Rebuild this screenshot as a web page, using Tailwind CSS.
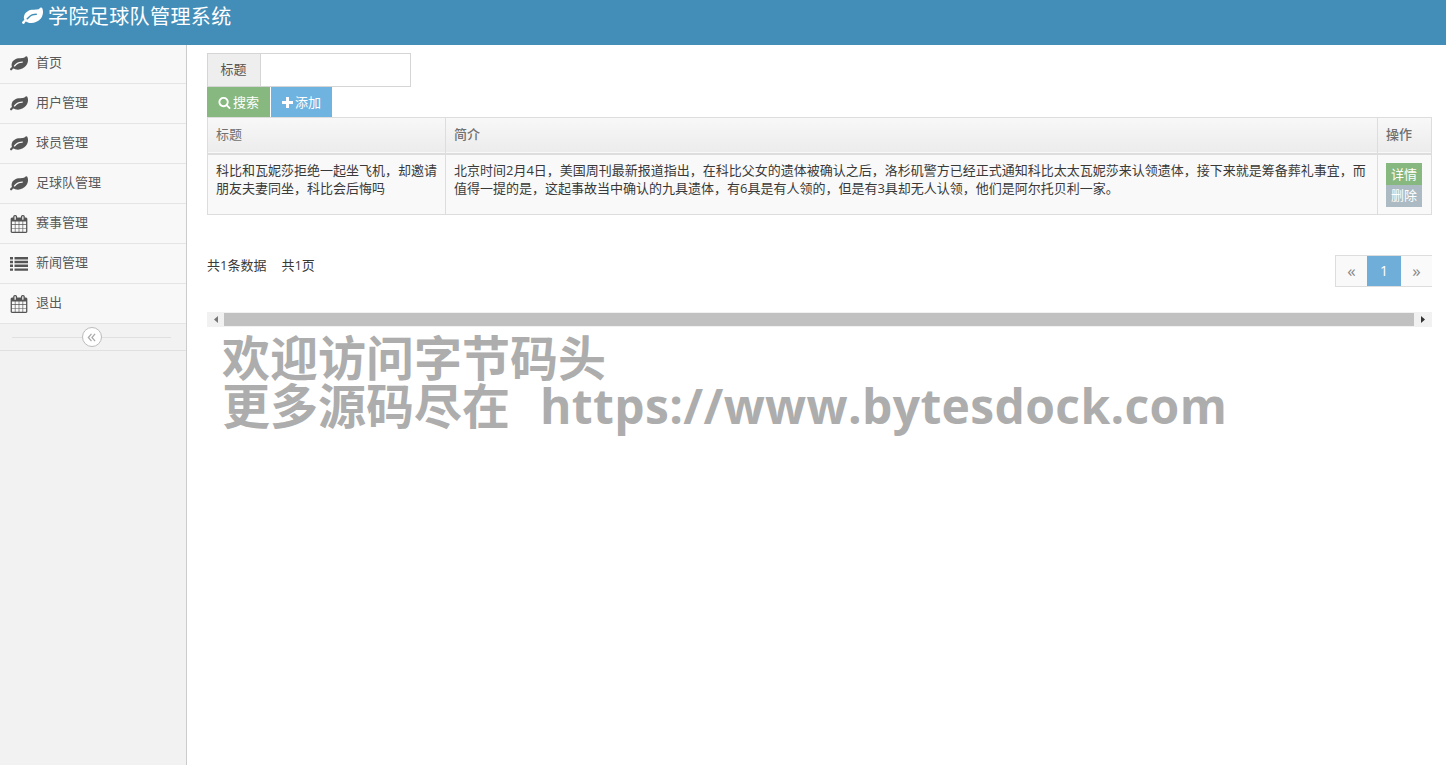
<!DOCTYPE html>
<html lang="zh-CN">
<head>
    <meta charset="UTF-8">
    <title>学院足球队管理系统</title>
    <script src="https://cdn.jsdelivr.net/npm/@tailwindcss/browser@4"></script>
</head>
<body class="h-[765px] overflow-hidden bg-white text-[13px] leading-[18px] text-[#393939] font-['Open_Sans','Noto_Sans_CJK_SC',sans-serif]">

    <svg class="hidden">
        <symbol id="leaf" viewBox="0 0 1792 1792"><path d="M1280 704q0-26-19-45t-45-19q-172 0-318 49.5t-259.5 134-235.5 219.5q-19 21-19 45 0 26 19 45t45 19q24 0 45-19 27-24 74-71t67-66q137-124 268.5-176t313.5-52q26 0 45-19t19-45zm512-198q0 95-20 193-46 224-184.5 383t-357.5 268q-214 108-438 108-148 0-286-47-15-5-88-42t-96-37q-16 0-39.5 32t-45 70-52.5 70-60 32q-30 0-51-11t-31-24-27-42q-2-4-6-11t-5.5-10-3-9.5-1.5-13.5q0-35 31-73.5t68-65.5 68-56 31-48q0-4-14-38t-16-44q-9-51-9-104 0-115 43.5-220t119-184.5 170.5-139 204-95.5q55-18 145-25.5t179.5-9 178.5-6 163.5-24 113.5-56.5l29.5-29.5 29.5-28 27-20 36.5-16 43.5-4.5q39 0 70.5 46t47.5 112 24 124 8 96z"/></symbol>
        <symbol id="calendar" viewBox="0 0 1792 1792"><path d="M192 1664h288v-288h-288v288zm352 0h320v-288h-320v288zm-352-352h288v-320h-288v320zm352 0h320v-320h-320v320zm-352-384h288v-288h-288v288zm736 736h320v-288h-320v288zm-384-736h320v-288h-320v288zm768 736h288v-288h-288v288zm-384-352h320v-320h-320v320zm-352-864v-288q0-13-9.5-22.5t-22.5-9.5h-64q-13 0-22.5 9.5t-9.5 22.5v288q0 13 9.5 22.5t22.5 9.5h64q13 0 22.5-9.5t9.5-22.5zm736 864h288v-320h-288v320zm-384-384h320v-288h-320v288zm384 0h288v-288h-288v288zm32-480v-288q0-13-9.5-22.5t-22.5-9.5h-64q-13 0-22.5 9.5t-9.5 22.5v288q0 13 9.5 22.5t22.5 9.5h64q13 0 22.5-9.5t9.5-22.5zm384-64v1280q0 52-38 90t-90 38h-1408q-52 0-90-38t-38-90v-1280q0-52 38-90t90-38h128v-96q0-66 47-113t113-47h64q66 0 113 47t47 113v96h384v-96q0-66 47-113t113-47h64q66 0 113 47t47 113v96h128q52 0 90 38t38 90z"/></symbol>
        <symbol id="list" viewBox="0 0 18 14"><path d="M0 0h3v2.400H0zM0 3.800h3v2.400H0zM0 7.600h3V10H0zM0 11.400h3v2.400H0zM4.500 0H18v2.400H4.500zM4.500 3.800H18v2.400H4.500zM4.500 7.600H18V10H4.500zM4.500 11.400H18v2.400H4.500z"/></symbol>
        <symbol id="search" viewBox="0 0 1792 1792"><path d="M1216 832q0-185-131.5-316.5t-316.5-131.5-316.5 131.5-131.5 316.5 131.5 316.5 316.5 131.5 316.5-131.5 131.5-316.5zm512 832q0 52-38 90t-90 38q-54 0-90-38l-343-342q-179 124-399 124-143 0-273.5-55.5t-225-150-150-225-55.5-273.5 55.5-273.5 150-225 225-150 273.5-55.5 273.5 55.5 225 150 150 225 55.5 273.5q0 220-124 399l343 343q37 37 37 90z"/></symbol>
    </svg>

    <header class="h-[45px] bg-[#438eb9] pl-[22px] pt-[4px] flex items-start gap-[5px] text-white text-[20px] leading-[26px] tracking-[0.4px]">
        <svg class="w-[21px] h-[21px] mt-[2px] fill-white"><use href="#leaf"/></svg>
        <span>学院足球队管理系统</span>
    </header>

    <div class="flex h-[720px]">
        <aside class="w-[187px] shrink-0 bg-[#f2f2f2] border-r border-[#ccc] text-[#585858]">
            <a class="h-[39px] bg-[#f8f8f8] border-b border-[#e5e5e5] flex items-center pl-[10px] gap-[8px]"><svg class="w-[18px] h-[18px] fill-[#555]"><use href="#leaf"/></svg><span class="mb-[4px]">首页</span></a>
            <a class="h-[40px] bg-[#f8f8f8] border-b border-[#e5e5e5] flex items-center pl-[10px] gap-[8px]"><svg class="w-[18px] h-[18px] fill-[#555]"><use href="#leaf"/></svg><span class="mb-[4px]">用户管理</span></a>
            <a class="h-[40px] bg-[#f8f8f8] border-b border-[#e5e5e5] flex items-center pl-[10px] gap-[8px]"><svg class="w-[18px] h-[18px] fill-[#555]"><use href="#leaf"/></svg><span class="mb-[4px]">球员管理</span></a>
            <a class="h-[40px] bg-[#f8f8f8] border-b border-[#e5e5e5] flex items-center pl-[10px] gap-[8px]"><svg class="w-[18px] h-[18px] fill-[#555]"><use href="#leaf"/></svg><span class="mb-[4px]">足球队管理</span></a>
            <a class="h-[40px] bg-[#f8f8f8] border-b border-[#e5e5e5] flex items-center pl-[10px] gap-[8px]"><svg class="w-[18px] h-[18px] fill-[#555]"><use href="#calendar"/></svg><span class="mb-[4px]">赛事管理</span></a>
            <a class="h-[40px] bg-[#f8f8f8] border-b border-[#e5e5e5] flex items-center pl-[10px] gap-[8px]"><svg class="w-[18px] h-[14px] fill-[#555]"><use href="#list"/></svg><span class="mb-[4px]">新闻管理</span></a>
            <a class="h-[40px] bg-[#f8f8f8] border-b border-[#e5e5e5] flex items-center pl-[10px] gap-[8px]"><svg class="w-[18px] h-[18px] fill-[#555]"><use href="#calendar"/></svg><span class="mb-[4px]">退出</span></a>
            <div class="h-[27px] border-b border-[#e0e0e0] flex items-center pl-[12px] pr-[15px]">
                <div class="flex-1 h-px bg-[#e0e0e0]"></div>
                <div class="w-[20px] h-[20px] rounded-full bg-white border border-[#bbb] flex items-center justify-center">
                    <svg class="w-[9px] h-[9px] fill-none stroke-[#aaa] stroke-[1.4]" viewBox="0 0 10 10"><path d="M5 1 1.500 5 5 9M9 1 5.500 5 9 9"/></svg>
                </div>
                <div class="flex-1 h-px bg-[#e0e0e0]"></div>
            </div>
        </aside>

        <main class="flex-1 pl-[20px] pr-[14px] pt-[8px]">
            <div class="flex w-[204px] h-[34px] border border-[#d5d5d5]">
                <span class="w-[53px] pb-[2px] pr-[1px] bg-[#eee] border-r border-[#d5d5d5] text-[#555] flex items-center justify-center">标题</span>
                <input type="text" class="flex-1 min-w-0 bg-white outline-none">
            </div>

            <div class="flex gap-px h-[30px]">
                <button class="w-[63px] bg-[#87b87f] text-white flex items-center justify-center gap-[2px]"><svg class="w-[13px] h-[13px] fill-white"><use href="#search"/></svg>搜索</button>
                <button class="w-[61px] bg-[#6fb3e0] text-white flex items-center justify-center gap-[2px]"><svg class="w-[11px] h-[11px] fill-white" viewBox="0 0 11 11"><path d="M4 0h3v4h4v3H7v4H4V7H0V4h4z"/></svg>添加</button>
            </div>

            <table class="w-[1225px] table-fixed border-collapse border border-[#ddd] bg-[#f9f9f9]">
                <thead>
                    <tr class="h-[36px] bg-gradient-to-b from-[#f8f8f8] to-[#ececec] text-[#707070] border-b-2 border-[#ddd] text-left">
                        <th class="w-[238px] px-[8px] pb-[2px] font-normal border-r border-[#ddd]">标题</th>
                        <th class="px-[8px] pb-[2px] font-medium border-r border-[#ddd]">简介</th>
                        <th class="w-[54px] px-[8px] pb-[2px] font-medium">操作</th>
                    </tr>
                </thead>
                <tbody>
                    <tr class="h-[61px]">
                        <td class="px-[8px] pt-[6px] align-top border-r border-[#ddd]">科比和瓦妮莎拒绝一起坐飞机，却邀请朋友夫妻同坐，科比会后悔吗</td>
                        <td class="px-[8px] pt-[6px] align-top border-r border-[#ddd]">北京时间2月4日，美国周刊最新报道指出，在科比父女的遗体被确认之后，洛杉矶警方已经正式通知科比太太瓦妮莎来认领遗体，接下来就是筹备葬礼事宜，而值得一提的是，这起事故当中确认的九具遗体，有6具是有人领的，但是有3具却无人认领，他们是阿尔托贝利一家。</td>
                        <td class="px-[8px] pt-[8px] align-top">
                            <div class="w-[36px] h-[22px] bg-[#87b87f] text-white text-center leading-[22px]">详情</div>
                            <div class="w-[36px] h-[22px] bg-[#abbac3] text-white text-center leading-[20px]">删除</div>
                        </td>
                    </tr>
                </tbody>
            </table>

            <div class="flex justify-between items-start mt-[40px] w-[1225px]">
                <div class="flex gap-[15px] mt-[1px]"><span>共1条数据</span><span>共1页</span></div>
                <div class="flex h-[32px] border-y border-l border-[#ddd] text-[#888] text-[17px]">
                    <span class="w-[31px] bg-[#f9f9f9] flex items-center justify-center">«</span>
                    <span class="w-[34px] bg-[#6faed9] text-white text-[14px] flex items-center justify-center">1</span>
                    <span class="w-[31px] bg-[#fafafa] flex items-center justify-center">»</span>
                </div>
            </div>

            <div class="flex items-center w-[1225px] h-[15px] mt-[25px] bg-[#f1f1f1]">
                <span class="w-[17px] flex justify-center"><svg class="w-[4px] h-[7px] fill-[#777]" viewBox="0 0 4 7"><path d="M4 0v7L0 3.500z"/></svg></span>
                <div class="flex-1 h-[13px] bg-[#c1c1c1]"></div>
                <span class="w-[18px] flex justify-center"><svg class="w-[4px] h-[7px] fill-[#333]" viewBox="0 0 4 7"><path d="M0 0v7l4-3.500z"/></svg></span>
            </div>

            <div class="ml-[15px] mt-[7px] text-[48px] leading-[48px] font-bold text-[#adadad] whitespace-pre">欢迎访问字节码头
更多源码尽在  <span class="tracking-[0.36px] ml-[5px]">https://www.bytesdock.com</span></div>
        </main>
    </div>
</body>
</html>
